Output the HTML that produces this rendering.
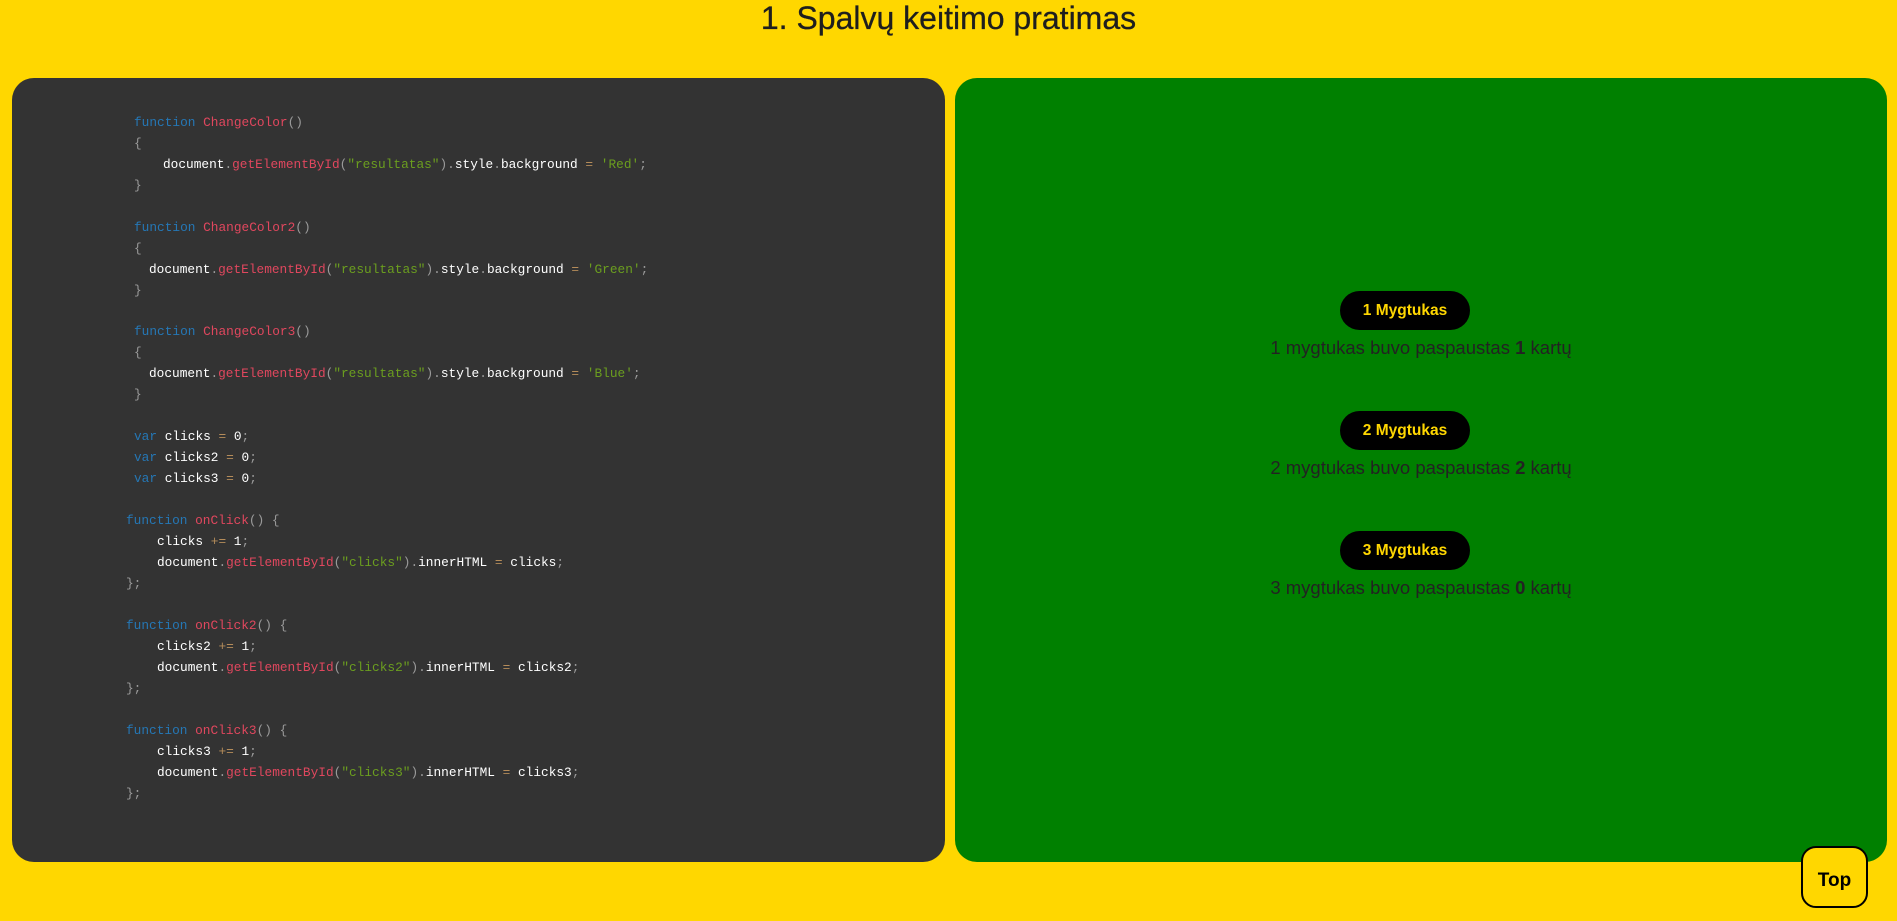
<!DOCTYPE html>
<html><head><meta charset="utf-8"><style>
html,body{margin:0;padding:0;}
body{width:1897px;height:921px;background:#FFD700;position:relative;overflow:hidden;font-family:"Liberation Sans",sans-serif;}
h1{position:absolute;left:0;right:0;top:0;margin:0;text-align:center;font-weight:normal;font-size:32px;line-height:36px;color:#1e1e1e;-webkit-text-stroke:0.3px #1e1e1e;}
.left{position:absolute;left:12px;top:78px;width:933px;height:784px;background:#333;border-radius:22px;}
.right{position:absolute;left:955px;top:78px;width:932px;height:784px;background:#008000;border-radius:22px;}
.l{position:absolute;font-family:"Liberation Mono",monospace;font-size:12.8px;line-height:20px;white-space:pre;color:#fff;}
.k{color:#2577b5}.f{color:#e0475e}.s{color:#6b9e1f}.o{color:#b58c5a}.p{color:#9a9a9a}
.btn{position:absolute;left:1340px;width:130px;height:39px;border-radius:20px;background:#000;color:#FFD700;font-weight:bold;font-size:15.5px;line-height:39px;text-align:center;}
.t{position:absolute;left:955px;width:932px;text-align:center;font-size:18.5px;color:#222;line-height:24px;}
.top{position:absolute;left:1801px;top:846px;width:63px;height:58px;border:2px solid #000;border-radius:15px;background:#FFD700;font-weight:bold;font-size:19px;line-height:66px;text-align:center;color:#000;}
</style></head><body>
<h1>1. Spalvų keitimo pratimas</h1>
<div class="left"></div>
<div class="right"></div>

<div class="l" style="left:134px;top:113px"><span class="k">function</span> <span class="f">ChangeColor</span><span class="p">()</span></div>
<div class="l" style="left:134px;top:134px"><span class="p">{</span></div>
<div class="l" style="left:163px;top:155px">document<span class="p">.</span><span class="f">getElementById</span><span class="p">(</span><span class="s">"resultatas"</span><span class="p">).</span>style<span class="p">.</span>background <span class="o">=</span> <span class="s">'Red'</span><span class="p">;</span></div>
<div class="l" style="left:134px;top:176px"><span class="p">}</span></div>

<div class="l" style="left:134px;top:218px"><span class="k">function</span> <span class="f">ChangeColor2</span><span class="p">()</span></div>
<div class="l" style="left:134px;top:239px"><span class="p">{</span></div>
<div class="l" style="left:149px;top:260px">document<span class="p">.</span><span class="f">getElementById</span><span class="p">(</span><span class="s">"resultatas"</span><span class="p">).</span>style<span class="p">.</span>background <span class="o">=</span> <span class="s">'Green'</span><span class="p">;</span></div>
<div class="l" style="left:134px;top:281px"><span class="p">}</span></div>

<div class="l" style="left:134px;top:322px"><span class="k">function</span> <span class="f">ChangeColor3</span><span class="p">()</span></div>
<div class="l" style="left:134px;top:343px"><span class="p">{</span></div>
<div class="l" style="left:149px;top:364px">document<span class="p">.</span><span class="f">getElementById</span><span class="p">(</span><span class="s">"resultatas"</span><span class="p">).</span>style<span class="p">.</span>background <span class="o">=</span> <span class="s">'Blue'</span><span class="p">;</span></div>
<div class="l" style="left:134px;top:385px"><span class="p">}</span></div>

<div class="l" style="left:134px;top:427px"><span class="k">var</span> clicks <span class="o">=</span> 0<span class="p">;</span></div>
<div class="l" style="left:134px;top:448px"><span class="k">var</span> clicks2 <span class="o">=</span> 0<span class="p">;</span></div>
<div class="l" style="left:134px;top:469px"><span class="k">var</span> clicks3 <span class="o">=</span> 0<span class="p">;</span></div>

<div class="l" style="left:126px;top:511px"><span class="k">function</span> <span class="f">onClick</span><span class="p">() {</span></div>
<div class="l" style="left:157px;top:532px">clicks <span class="o">+=</span> 1<span class="p">;</span></div>
<div class="l" style="left:157px;top:553px">document<span class="p">.</span><span class="f">getElementById</span><span class="p">(</span><span class="s">"clicks"</span><span class="p">).</span>innerHTML <span class="o">=</span> clicks<span class="p">;</span></div>
<div class="l" style="left:126px;top:574px"><span class="p">};</span></div>

<div class="l" style="left:126px;top:616px"><span class="k">function</span> <span class="f">onClick2</span><span class="p">() {</span></div>
<div class="l" style="left:157px;top:637px">clicks2 <span class="o">+=</span> 1<span class="p">;</span></div>
<div class="l" style="left:157px;top:658px">document<span class="p">.</span><span class="f">getElementById</span><span class="p">(</span><span class="s">"clicks2"</span><span class="p">).</span>innerHTML <span class="o">=</span> clicks2<span class="p">;</span></div>
<div class="l" style="left:126px;top:679px"><span class="p">};</span></div>

<div class="l" style="left:126px;top:721px"><span class="k">function</span> <span class="f">onClick3</span><span class="p">() {</span></div>
<div class="l" style="left:157px;top:742px">clicks3 <span class="o">+=</span> 1<span class="p">;</span></div>
<div class="l" style="left:157px;top:763px">document<span class="p">.</span><span class="f">getElementById</span><span class="p">(</span><span class="s">"clicks3"</span><span class="p">).</span>innerHTML <span class="o">=</span> clicks3<span class="p">;</span></div>
<div class="l" style="left:126px;top:784px"><span class="p">};</span></div>

<div class="btn" style="top:291px">1 Mygtukas</div>
<div class="t" style="top:336px">1 mygtukas buvo paspaustas <b>1</b> kartų</div>
<div class="btn" style="top:411px">2 Mygtukas</div>
<div class="t" style="top:456px">2 mygtukas buvo paspaustas <b>2</b> kartų</div>
<div class="btn" style="top:531px">3 Mygtukas</div>
<div class="t" style="top:576px">3 mygtukas buvo paspaustas <b>0</b> kartų</div>

<div class="top">Top</div>
</body></html>
